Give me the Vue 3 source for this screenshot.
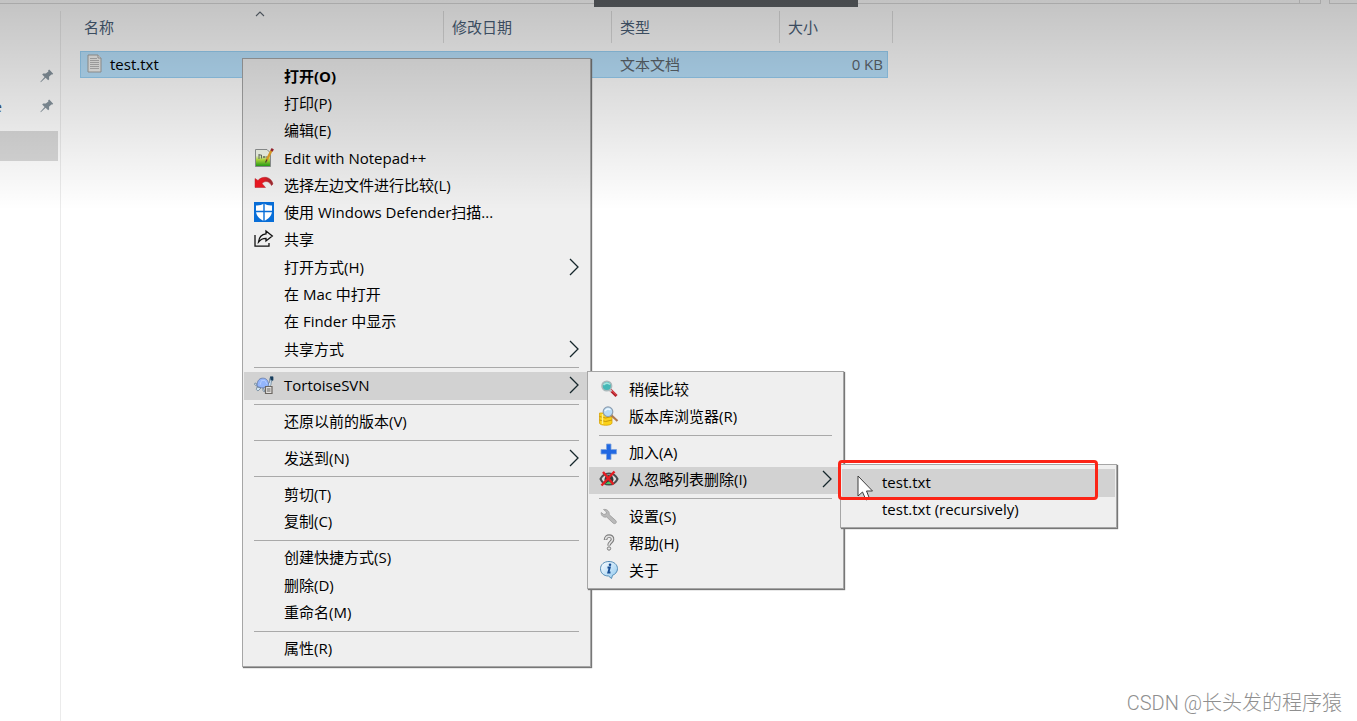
<script setup>
import { ref } from 'vue'

const sep = { sep: true }
const menus = ref([
  {
    name: 'main',
    label: '文件菜单',
    items: [
      { text: '打开(O)', bold: true },
      { text: '打印(P)' },
      { text: '编辑(E)' },
      { text: 'Edit with Notepad++', icon: 'notepad' },
      { text: '选择左边文件进行比较(L)', icon: 'undo' },
      { text: '使用 Windows Defender扫描...', icon: 'defender' },
      { text: '共享', icon: 'share' },
      { text: '打开方式(H)', more: true },
      { text: '在 Mac 中打开' },
      { text: '在 Finder 中显示' },
      { text: '共享方式', more: true },
      sep,
      { text: 'TortoiseSVN', icon: 'tortoise', more: true, active: true },
      sep,
      { text: '还原以前的版本(V)' },
      sep,
      { text: '发送到(N)', more: true },
      sep,
      { text: '剪切(T)' },
      { text: '复制(C)' },
      sep,
      { text: '创建快捷方式(S)' },
      { text: '删除(D)' },
      { text: '重命名(M)' },
      sep,
      { text: '属性(R)' },
    ],
  },
  {
    name: 'svn',
    label: 'TortoiseSVN',
    items: [
      { text: '稍候比较', icon: 'lens' },
      { text: '版本库浏览器(R)', icon: 'repo' },
      sep,
      { text: '加入(A)', icon: 'plus' },
      { text: '从忽略列表删除(I)', icon: 'ignore', more: true, active: true },
      sep,
      { text: '设置(S)', icon: 'wrench' },
      { text: '帮助(H)', icon: 'help' },
      { text: '关于', icon: 'info' },
    ],
  },
  {
    name: 'ignored',
    label: '从忽略列表删除',
    items: [
      { text: 'test.txt', active: true },
      { text: 'test.txt (recursively)' },
    ],
  },
])
</script>

<template>
  <div class="window">
    <div class="toolbar"><span class="address"></span><span class="refresh"></span><span class="search"></span></div>
    <div class="notch"></div>

    <div class="body">
      <nav class="sidebar">
        <a v-for="n in 2" :key="n" href="#" class="quick" aria-label="快速访问">
          <span class="clip">{{ n === 2 ? 'e' : '' }}</span>
          <svg width="14" height="14" viewBox="0 0 14 14">
            <path d="M8.2 1.2 9.2 0.6 13.2 4.8 12.5 5.6 11.4 5.4 9 7.8 9.2 10.2 8.2 11.2 5.6 8.8 0.8 13.2 0.4 12.8 4.6 7.9 2.2 5.4 3.2 4.4 5.8 4.6 8.4 2.4Z" fill="#87959f" />
          </svg>
        </a>
        <a href="#" class="quick current" aria-label="当前文件夹"></a>
      </nav>

      <main class="files">
        <svg class="sort" width="10" height="6" viewBox="0 0 10 6"><path d="M1 5 5 1 9 5" fill="none" stroke="#606a74" stroke-width="1.1" /></svg>
        <table>
          <colgroup><col class="c-name" /><col class="c-date" /><col class="c-type" /><col class="c-size" /></colgroup>
          <thead>
            <tr><th>名称</th><th>修改日期</th><th>类型</th><th>大小</th></tr>
          </thead>
          <tbody>
            <tr>
              <td class="name">
                <span class="file">
                  <svg width="15" height="19" viewBox="0 0 15 19">
                    <path d="M1 1H11L14 4V18H1Z" fill="#f3f3f1" stroke="#a3a3a1" />
                    <path d="M11 1V4H14" fill="#fff" stroke="#a3a3a1" />
                    <path d="M3 4.5H10M3 6.5H12M3 8.5H12M3 10.5H12M3 12.5H12M3 14.5H12" stroke="#b8b8b8" />
                  </svg>
                  test.txt
                </span>
              </td>
              <td></td>
              <td class="type">文本文档</td>
              <td class="size">0 KB</td>
            </tr>
          </tbody>
        </table>
      </main>
    </div>

    <ul v-for="m in menus" :key="m.name" class="menu" :class="m.name" role="menu" :aria-label="m.label">
      <template v-for="(it, i) in m.items" :key="i">
        <li v-if="it.sep" class="sep" role="separator"></li>
        <li v-else class="row" role="none">
          <button type="button" role="menuitem" :class="{ active: it.active, bold: it.bold }">
            <span class="icon">
              <svg v-if="it.icon === 'notepad'" width="20" height="20" viewBox="0 0 20 20">
                <defs><linearGradient id="np" x1="0" y1="0" x2="0" y2="1"><stop offset=".35" stop-color="#eef3e4" /><stop offset=".6" stop-color="#b4de3c" /><stop offset="1" stop-color="#1c9c14" /></linearGradient></defs>
                <path d="M1.5 1.5H13L16.5 5V18.5H1.5Z" fill="url(#np)" stroke="#8c9090" />
                <path d="M5 6V11M5 7H7.500V10.500M9 9H11M10 8V10M11.500 9H13.500" fill="none" stroke="#65705f" />
                <path d="M17.5 2.5 12.5 12.5" stroke="#e3a126" stroke-width="2.4" /><path d="M18.8 .8 17.4 3" stroke="#9c2530" stroke-width="2.6" /><path d="M13 11.5 11.5 14.5" stroke="#54412b" stroke-width="1.2" />
              </svg>
              <svg v-else-if="it.icon === 'undo'" width="20" height="20" viewBox="0 0 20 20">
                <defs><linearGradient id="ud"><stop offset=".45" stop-color="#ee1822" /><stop offset="1" stop-color="#8d3036" /></linearGradient></defs>
                <path d="M1 3.500 4 5.500C8 .5 17 1 19 9L17.500 10.500C15.500 6.500 11.500 5 8 8.500L11.500 12.500H1Z" fill="url(#ud)" stroke="#b5222b" stroke-width=".5" />
              </svg>
              <svg v-else-if="it.icon === 'defender'" width="20" height="20" viewBox="0 0 20 20">
                <path d="M0 0H20V20H0Z" fill="#086ed8" />
                <path d="M10 1.5C12 3 15 3.6 18 3.4V9C18 13.8 14.5 17 10 19 5.500 17 2 13.800 2 9V3.400C5 3.600 8 3 10 1.500Z" fill="#fff" />
                <path d="M10 1V19.500M1 9.500H19" stroke="#086ed8" stroke-width="1.400" />
              </svg>
              <svg v-else-if="it.icon === 'share'" width="20" height="20" viewBox="0 0 20 20">
                <path d="M1 6V17.200H15V14M12 2 18.300 7 12 12V9.300C8.500 9.300 6.500 10.300 4.500 13 5 8.500 7.500 5.200 12 4.800Z" fill="none" stroke="#111" stroke-width="1.300" />
              </svg>
              <svg v-else-if="it.icon === 'tortoise'" width="20" height="20" viewBox="0 0 20 20">
                <path d="M2 8Q0 8 .5 9.500L4 12ZM3 12Q1 15 4 16L7 13ZM9 13Q8 17 11 16.500ZM13 10Q17 8 15.500 4 16 1 19 2V5Q18.500 6 17.500 6 18 10 14 13Z" fill="#d3e6f4" stroke="#6f8497" stroke-width=".8" />
                <path d="M3 11C3 5 6 2.800 9.500 3.200 13 3.400 15 7 14.500 10.500 11 13.500 7 13.500 3 11Z" fill="#93b5fb" stroke="#6277a4" stroke-width=".8" />
                <path d="M6 10 7.500 5.500H11L13 9" fill="none" stroke="#b2cbff" /><path d="M16 1.500H19.200V5.500H16.500Z" fill="#163d5c" />
                <path d="M11.500 11.500H18V18.500H11.500Z" fill="#e2e0de" stroke="#6b6661" stroke-width="1.200" /><path d="M13 14H16.500M13 16H16.500" stroke="#6b6661" />
              </svg>
              <svg v-else-if="it.icon === 'lens'" width="20" height="20" viewBox="0 0 20 20">
                <path d="M11.500 11 17.500 17" stroke="#b11f29" stroke-width="3" /><path d="M12 10.800 17.500 16" stroke="#f15a5f" stroke-width="1" /><path d="M10 10 12.500 12.500" stroke="#c7cdd0" stroke-width="2" />
                <circle cx="7.800" cy="7" r="4.800" fill="#45b8b7" stroke="#aab9bb" stroke-width="1.600" /><path d="M4.500 6Q7.500 2.500 11 5.500" fill="none" stroke="#a4e5df" stroke-width="1.600" />
              </svg>
              <svg v-else-if="it.icon === 'repo'" width="20" height="20" viewBox="0 0 20 20">
                <path d="M.5 7V17C.5 20 13 20 13 17V7Z" fill="#fbd219" stroke="#d8a50a" stroke-width=".8" /><path d="M.5 10.500Q6.500 13.500 13 10.500M.5 14Q6.500 17 13 14" fill="none" stroke="#c8970a" /><path d="M3.500 8V18" stroke="#fff08a" stroke-width="1.400" />
                <path d="M12 9 18.500 15" stroke="#ae7a50" stroke-width="2.200" /><circle cx="9" cy="5.700" r="4.800" fill="#b9dcf6" stroke="#8d9eb0" stroke-width="1.200" /><path d="M6 5Q8.500 1.500 11.500 4" fill="none" stroke="#eef8ff" stroke-width="1.500" />
              </svg>
              <svg v-else-if="it.icon === 'plus'" width="20" height="20" viewBox="0 0 20 20">
                <path d="M7.500 2H12V7.500H17.500V12H12V17.500H7.500V12H2V7.500H7.500Z" fill="#2168e2" stroke="#7ba2dd" stroke-width=".8" />
              </svg>
              <svg v-else-if="it.icon === 'ignore'" width="20" height="20" viewBox="0 0 20 20">
                <path d="M1.500 10Q4 4.500 10 4.500T18.500 10Q16 15.500 10 15.500T1.500 10Z" fill="#dedede" stroke="#4a4e4e" stroke-width="2" /><circle cx="10" cy="10.500" r="4.500" fill="#343a39" /><path d="M6.500 15Q10 10 13.500 15Z" fill="#49c464" />
                <path d="M4 3 14.500 15.500M15.500 2.500 2.500 16.500" stroke="#e61c22" stroke-width="2.400" />
              </svg>
              <svg v-else-if="it.icon === 'wrench'" width="20" height="20" viewBox="0 0 20 20">
                <path d="M4.500 3.500 7.500 6 7 8 4.800 8.500 2.200 6.500C1.800 9.500 4.500 11.800 7.700 11L14 17C16.200 18.800 18.300 16.500 16.800 14.600L10.200 8.700C10.800 5.500 8 2.800 4.500 3.500Z" fill="#b9b9b9" stroke="#999" stroke-width=".8" />
              </svg>
              <svg v-else-if="it.icon === 'help'" width="20" height="20" viewBox="0 0 20 20">
                <path d="M6.500 7C6.500 1.500 14 2 13.500 6.500 13.200 9.200 10 9 10 12.500" fill="none" stroke="#7d7d7d" stroke-width="3.600" /><path d="M6.500 6.500C7 2 13.700 2.500 13.500 6.500 13.200 9.200 10 9 10 12" fill="none" stroke="#e4e4e4" stroke-width="1.500" /><circle cx="10" cy="15.500" r="1.700" fill="#e4e4e4" stroke="#7d7d7d" />
              </svg>
              <svg v-else-if="it.icon === 'info'" width="20" height="20" viewBox="0 0 20 20">
                <defs><linearGradient id="inf" x1="0" y1="0" x2="1" y2="1"><stop offset="0" stop-color="#fff" /><stop offset="1" stop-color="#8cc7ef" /></linearGradient></defs>
                <path d="M10 1.500C15 1.500 18.500 4.700 18.500 8.700 18.500 12 16 14.500 13.500 15.300L12.500 18.500 9.500 16C4.500 16 1.500 12.800 1.500 8.700S5 1.500 10 1.500Z" fill="url(#inf)" stroke="#558db6" /><circle cx="11" cy="4.700" r="1.300" fill="#174d93" /><path d="M8.500 7.500H10.800L9.300 12.500H11.500" fill="none" stroke="#174d93" stroke-width="1.900" />
              </svg>
            </span>
            <span class="text">{{ it.text }}</span>
            <svg v-if="it.more" class="more" width="10" height="18" viewBox="0 0 10 18"><path d="M1 1 9 9 1 17" fill="none" stroke="#16272c" stroke-width="1.300" /></svg>
          </button>
        </li>
      </template>
    </ul>

    <svg class="pointer" width="18" height="26" viewBox="0 0 18 26"><path d="M1 1V21L5.500 17 9 25 12.500 23.500 9.500 16H15.500Z" fill="#fff" stroke="#3c3c3c" /></svg>
    <div class="highlight"></div>
    <div class="shade"></div>
    <div class="watermark">CSDN @长头发的程序猿</div>
  </div>
</template>

<style>
body { margin: 0; }
</style>

<style scoped>
.window {
  position: relative;
  display: flex;
  flex-direction: column;
  min-height: 100vh;
  overflow: hidden;
  background: #fff;
  color: #000;
  font: 15px/20px "Open Sans", "Noto Sans CJK SC", sans-serif;
}
.toolbar { display: flex; height: 4px; }
.toolbar span { box-sizing: border-box; border-bottom: 1px solid #dcdcdc; }
.address { flex: 1; border-right: 1px solid #dcdcdc; }
.refresh { width: 21px; border-right: 1px solid #dcdcdc; }
.search { width: 28px; margin-left: 8px; border-left: 1px solid #dcdcdc; }
.notch { position: absolute; top: 0; left: 594px; width: 264px; height: 7px; background: #5e6266; }
.body { display: flex; flex: 1; padding-top: 7px; }
.sidebar { box-sizing: border-box; width: 61px; padding-top: 50px; border-right: 1px solid #ebebeb; }
.quick { display: flex; align-items: center; justify-content: space-between; box-sizing: border-box; width: 58px; height: 30px; padding-right: 4px; color: #35506b; text-decoration: none; }
.clip { display: flex; justify-content: flex-end; width: 2px; overflow: hidden; }
.current { margin-top: 10px; background: #d9d9d9; }
.files { position: relative; flex: 1; padding-left: 19px; }
.sort { position: absolute; top: 0; left: 194px; }
table { width: 808px; table-layout: fixed; border-collapse: separate; border-spacing: 0; }
.c-name { width: 364px; }
.c-date, .c-type { width: 168px; }
th { position: relative; height: 32px; padding: 0 0 0 8px; color: #4a6078; font-weight: 400; text-align: left; }
th:first-child { padding-left: 4px; }
th::after { position: absolute; top: 0; right: 0; width: 1px; height: 32px; background: #dfdfdf; content: ""; }
th:last-child::after { right: -5px; }
tbody::before { display: block; height: 8px; content: ""; }
td { box-sizing: border-box; height: 27px; padding: 0 0 2px; border: solid #99d1f5; border-width: 1px 0; background: #bae3fe; color: #5c656c; }
td.name { padding-left: 6px; border-left-width: 1px; color: #000; }
.file { display: flex; align-items: center; gap: 8px; }
td.type { padding-left: 8px; }
td.size { padding-right: 4px; border-right-width: 1px; text-align: right; }

.menu { position: absolute; display: flex; flex-direction: column; box-sizing: border-box; margin: 0; padding: 4px 1px 3px; border: 1px solid #a6a6a6; background: #efefef; box-shadow: 1px 1px 1px #777; list-style: none; }
.main { top: 58px; left: 242px; width: 349px; height: 609px; }
.svn { top: 371px; left: 587px; width: 257px; height: 218px; }
.ignored { top: 464px; left: 840px; width: 277px; height: 64px; }
.row { display: flex; flex: 1; min-height: 0; }
.sep { height: 1px; margin: 4px 10px; background: #a9a9a9; }
button { display: flex; flex: 1; align-items: center; padding: 0 10px 2px; border: 0; background: none; color: #000; font: inherit; text-align: left; white-space: nowrap; }
button.active { background: #d2d2d2; }
button.bold { font-weight: 700; }
.icon { display: flex; width: 20px; height: 20px; margin-right: 10px; }
.text { flex: 1; }

.pointer { position: absolute; top: 475px; left: 857px; }
.highlight { position: absolute; top: 460px; left: 838px; box-sizing: border-box; width: 260px; height: 40px; border: 3px solid #fc2416; border-radius: 4px; }
.shade { position: absolute; inset: 0 0 auto; height: 210px; background: linear-gradient(rgba(0, 0, 0, 0.235), rgba(0, 0, 0, 0)); pointer-events: none; }
.watermark { position: absolute; right: 15px; bottom: 3px; color: #8f8f8f; font: 300 20px/30px Roboto, "Noto Sans CJK SC", sans-serif; }
</style>
